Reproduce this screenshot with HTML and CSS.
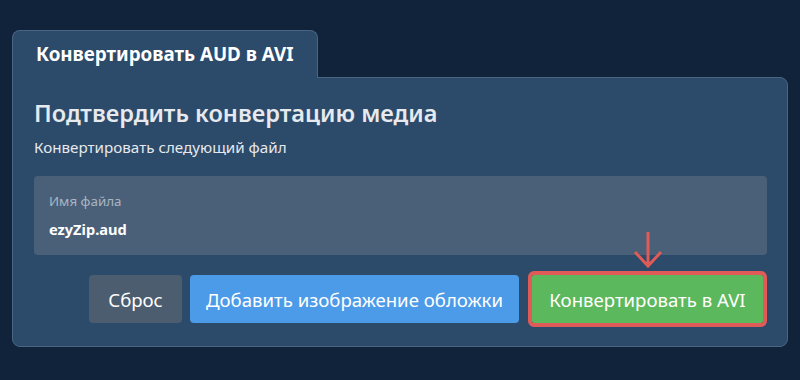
FILE: index.html
```html
<!DOCTYPE html>
<html lang="ru">
  <head>
    <meta charset="UTF-8" />
    <meta name="viewport" content="width=device-width, initial-scale=1.0" />
    <title>Конвертировать AUD в AVI</title>
    <link rel="stylesheet" href="styles.css">
  </head>
  <body>
    <section class="panel">
      <div class="panel-tab">Конвертировать AUD в AVI</div>
      <div class="panel-body">
        <h2 class="panel-title">Подтвердить конвертацию медиа</h2>
        <p class="panel-subtitle">Конвертировать следующий файл</p>

        <div class="file-box">
          <div class="file-label">Имя файла</div>
          <div class="file-name">ezyZip.aud</div>
        </div>

        <div class="actions">
          <button class="btn btn-reset">Сброс</button>
          <button class="btn btn-cover">Добавить изображение обложки</button>
          <span class="convert-wrap">
            <svg class="convert-arrow" width="30" height="38" viewBox="0 0 30 38">
              <path d="M15 1 V35 M2 21 L15 35 L28 21" fill="none" stroke="#de5b57" stroke-width="3" />
            </svg>
            <button class="btn btn-convert">Конвертировать в AVI</button>
          </span>
        </div>
      </div>
    </section>
  </body>
</html>
```

FILE: styles.css
```css
html,
body {
  padding: 0;
  margin: 0;
}

body {
  background-color: #10233a;
  font-family: "Noto Sans", "Open Sans", sans-serif;
  color: #e9edf2;
}

.panel {
  padding: 30px 12px 0 12px;
}

.panel-tab {
  display: inline-block;
  position: relative;
  z-index: 1;
  margin-bottom: -1px;
  padding: 13px 23px 14px 23px;
  line-height: 20px;
  font-size: 18.8px;
  font-weight: 700;
  color: #ffffff;
  background-color: #2c4a6a;
  border: 1px solid #4a6584;
  border-bottom: none;
  border-radius: 8px 8px 0 0;
}

.panel-body {
  background-color: #2c4a6a;
  border: 1px solid #4a6584;
  border-radius: 0 8px 8px 8px;
  padding: 19px 20px 23px 21px;
}

.panel-title {
  margin: 0;
  font-size: 23.6px;
  line-height: 32px;
  font-weight: 600;
  color: #e6e9ed;
}

.panel-subtitle {
  margin: 8px 0 0 0;
  font-size: 15.2px;
  line-height: 20px;
  color: #e6e9ed;
}

.file-box {
  margin-top: 19px;
  background-color: #4a6078;
  border-radius: 4px;
  padding: 17px 15px 16px 15px;
  height: 46px;
}

.file-label {
  font-size: 13.4px;
  line-height: 16px;
  color: #a9b5c2;
}

.file-name {
  margin-top: 10px;
  font-size: 14.6px;
  line-height: 20px;
  font-weight: 700;
  color: #ffffff;
}

.actions {
  display: flex;
  justify-content: flex-end;
  align-items: center;
  gap: 8px;
  margin-top: 20px;
  padding-right: 4px;
}

.btn {
  height: 48px;
  border: none;
  border-radius: 4px;
  padding: 0 8px;
  font-family: "Noto Sans", "Open Sans", sans-serif;
  font-size: 18.6px;
  color: #ffffff;
  cursor: pointer;
}

.btn-reset {
  background-color: #4c5d6f;
  width: 93px;
}

.btn-cover {
  background-color: #4c9be8;
  width: 329px;
}

.convert-wrap {
  position: relative;
  display: flex;
  margin-left: 5px;
}

.btn-convert {
  background-color: #5cb85c;
  width: 231px;
  border-radius: 2px;
  outline: 4px solid #de5b57;
}

.convert-arrow {
  position: absolute;
  left: 50%;
  bottom: 100%;
  margin-bottom: 6px;
  transform: translateX(-50%);
}
```
